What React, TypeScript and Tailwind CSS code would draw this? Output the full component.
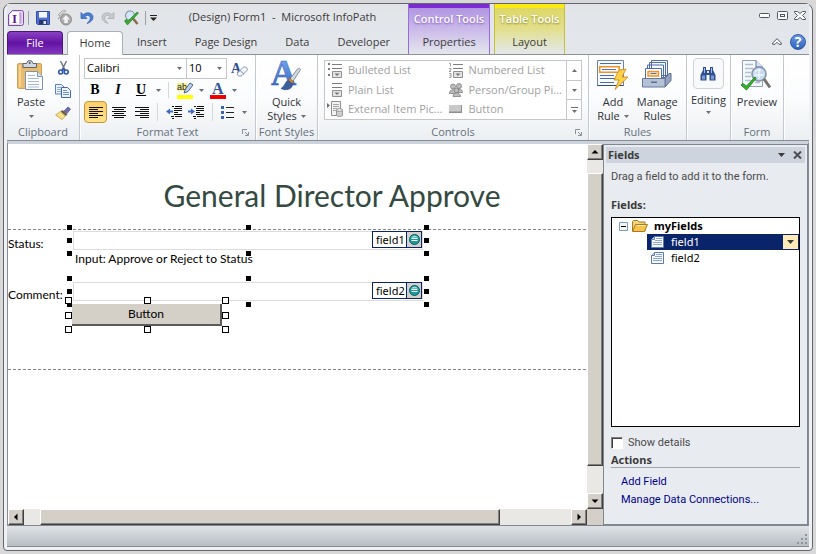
import type { ReactNode } from 'react';

interface ChildrenProps {
  children: ReactNode;
}

const TABS = ['Insert', 'Page Design', 'Data', 'Developer'];

/* ---------- small shared pieces ---------- */

function DownArrow({ className = 'text-[#6b6f75]' }: { className?: string }) {
  return (
    <svg width="5" height="3" viewBox="0 0 5 3" className={`shrink-0 ${className}`} aria-hidden="true">
      <path d="M0 0h5L2.5 3z" fill="currentColor" />
    </svg>
  );
}

function IconButton({ label, className = '', children }: ChildrenProps & { label: string; className?: string }) {
  return (
    <button type="button" aria-label={label} className={`flex shrink-0 items-center justify-center ${className}`}>
      {children}
    </button>
  );
}

function Divider({ className = 'h-4 bg-[#c9cdd2]' }: { className?: string }) {
  return <span className={`w-px shrink-0 ${className}`} />;
}

/* ---------- title bar icons ---------- */

function AppIcon() {
  return (
    <svg width="16" height="16" viewBox="0 0 16 16" aria-hidden="true">
      <path d="M4.5.5h9a2 2 0 0 1 2 2v11a2 2 0 0 1-2 2h-13v-11z" fill="#e9daf5" stroke="#7b4ba3" />
      <path d="M2 4.500 4.500 2H11v12H2z" fill="#fff" />
      <path d="M12.500 2.500v11" stroke="#c49ce4" strokeWidth="2" />
      <text x="4" y="13" fontSize="13" fontWeight="bold" fontFamily="Liberation Serif, serif" fill="#5b1f86">
        I
      </text>
    </svg>
  );
}

function SaveIcon() {
  return (
    <svg width="14" height="14" viewBox="0 0 14 14" aria-hidden="true">
      <path d="M.5.5h13v13h-12l-1-1z" fill="#4f6fd0" stroke="#3350a8" />
      <path d="M3 1h8v6H3z" fill="#f4f7fd" />
      <path d="M3 6h8v1H3z" fill="#b9c6e8" />
      <path d="M3 9h8v4.500H3z" fill="#26376f" />
      <path d="M7.500 10h2.500v3H7.500z" fill="#dfe6f6" />
    </svg>
  );
}

function PublishIcon() {
  return (
    <svg width="16" height="16" viewBox="0 0 16 16" aria-hidden="true">
      <path d="M6 0 1 5l2.500.5L1 9l6-4-2.500-.5L9 1z" fill="#d4d4d4" stroke="#9a9a9a" strokeWidth=".7" />
      <circle cx="9" cy="9.500" r="5.500" fill="#aaa" stroke="#8c8c8c" />
      <path d="m9 5 4 4.500h-2.300V13H7.300V9.500H5z" fill="#f2f2f2" />
    </svg>
  );
}

function UndoIcon({ redo = false }: { redo?: boolean }) {
  return (
    <svg width="14" height="14" viewBox="0 0 14 14" className={redo ? '-scale-x-100' : ''} aria-hidden="true">
      <path
        d="M1 1.500v6h6L5 5.500c2-1.800 5-1.300 5.300 1.200.2 2-1.500 4-3.300 5.800 3.500-1 6-3.500 6-6.300C13 1.800 7 .3 3.200 3.700z"
        fill={redo ? '#c8cbcf' : '#4b7fd4'}
        stroke={redo ? '#a3a7ac' : '#2c5cae'}
        strokeWidth=".7"
      />
    </svg>
  );
}

function PreviewSmallIcon() {
  return (
    <svg width="17" height="16" viewBox="0 0 17 16" aria-hidden="true">
      <circle cx="7" cy="5.500" r="4.500" fill="#d5e6f4" stroke="#8296ab" strokeWidth="1.200" />
      <path d="m10.500 9 4 5" stroke="#8c6a4f" strokeWidth="2.600" />
      <path d="m1.500 11 3 4L15.500 3 14 2 5 11l-1.500-2z" fill="#3aa935" stroke="#22761f" strokeWidth=".6" />
    </svg>
  );
}

/* ---------- ribbon icons ---------- */

function PasteIcon() {
  return (
    <svg width="28" height="31" viewBox="0 0 28 31" aria-hidden="true">
      <rect x=".5" y="3.500" width="24" height="25" rx="1.500" fill="#e9bb6b" stroke="#d0a155" />
      <path d="M2 5h2v22H2z" fill="#f5d395" />
      <path d="M6 3.500h3.500L11 .8h3.500l1.500 2.700h3.500v4H6z" fill="#d3d8df" stroke="#5b6470" />
      <circle cx="12.700" cy="3" r="1" fill="#4e5763" />
      <path d="M8.500 11.500h12l5 5v13h-17z" fill="#fbfdff" stroke="#7b93b8" />
      <path d="M20.500 11.500v5h5" fill="#d8e3f3" stroke="#7b93b8" />
      <path d="M11 15.500h7M11 18.500h11M11 21.500h11M11 24.500h11M11 27h11" stroke="#a9bad5" />
    </svg>
  );
}

function CutIcon() {
  return (
    <svg width="11" height="15" viewBox="0 0 11 15" aria-hidden="true">
      <path d="m2.500 0 4.500 9M8.500 0 4 9" stroke="#6d7786" strokeWidth="1.500" />
      <circle cx="2.700" cy="11" r="2" fill="none" stroke="#2d55b2" strokeWidth="1.600" />
      <circle cx="8.200" cy="11" r="2" fill="none" stroke="#2d55b2" strokeWidth="1.600" />
      <path d="M3.500 9.500 5.500 6.500 7.500 9.500z" fill="#2d55b2" />
    </svg>
  );
}

function CopyIcon() {
  return (
    <svg width="16" height="14" viewBox="0 0 16 14" aria-hidden="true">
      <path d="M.5.5h6l2.500 2.500v7H.5z" fill="#eef4fd" stroke="#5a80c4" />
      <path d="M2 3.500h4M2 5.500h4M2 7.500h4" stroke="#8fabde" />
      <path d="M6.500 3.500h6L15.500 6.500v7h-9z" fill="#eef4fd" stroke="#3f69b5" />
      <path d="M8 6.500h4M8 8.500h6M8 10.500h6" stroke="#6f93d3" />
    </svg>
  );
}

function BrushIcon() {
  return (
    <svg width="16" height="14" viewBox="0 0 16 14" aria-hidden="true">
      <path d="m9 5 4-4 2.500 2-3.500 4.500z" fill="#6e72a8" stroke="#474b80" strokeWidth=".7" />
      <path d="m7.500 4 5 4.500-2 1.500-5-4.500z" fill="#6b5b48" />
      <path d="M5.500 5.500 .5 9l6.500 4.500 3.500-3.500z" fill="#f3d977" stroke="#b8963f" strokeWidth=".7" />
      <path d="m3 8 5 4M4.500 7l4.500 4" stroke="#fff4bd" strokeWidth=".8" />
    </svg>
  );
}

function ClearFormatIcon() {
  return (
    <svg width="17" height="16" viewBox="0 0 17 16" aria-hidden="true">
      <text x="0" y="12" fontSize="14" fontWeight="bold" fontFamily="Liberation Serif, serif" fill="#2c4d91">
        A
      </text>
      <path d="m6.500 12 5.500-5.500c2-1.500 5.500.5 4 3L11 14.500c-2.500 1.500-5.500 0-4.500-2.500z" fill="#f5f8fd" stroke="#8090b5" />
      <path d="m9 9.500 4 3.500" stroke="#8090b5" />
    </svg>
  );
}

function HighlightIcon() {
  return (
    <svg width="16" height="17" viewBox="0 0 16 17" aria-hidden="true">
      <path d="M0 1h10v8H0z" fill="#f7ee8c" />
      <text x="0" y="8" fontSize="9" fontFamily="Liberation Sans, sans-serif" fill="#222">ab</text>
      <path d="m7 11 1.500-4L13 1l3 2-5 6.500z" fill="#c3d1e8" stroke="#44608f" />
      <path d="M0 13h16v4H0z" fill="#ffff00" />
    </svg>
  );
}

function FontColorIcon() {
  return (
    <svg width="16" height="17" viewBox="0 0 16 17" className="overflow-visible" aria-hidden="true">
      <text x="2" y="12" fontSize="16" fontWeight="bold" fontFamily="Liberation Serif, serif" fill="#2f539b">
        A
      </text>
      <path d="M0 13h16v4H0z" fill="#f00000" />
    </svg>
  );
}

function AlignIcon({ align }: { align: 'left' | 'center' | 'right' }) {
  const paths = {
    left: 'M0 .5h14M0 2.500h9M0 4.500h14M0 6.500h9M0 8.500h14M0 10.500h9',
    center: 'M0 .5h14M2 2.500h10M0 4.500h14M2 6.500h10M0 8.500h14M2 10.500h10',
    right: 'M0 .5h14M5 2.500h9M0 4.500h14M5 6.500h9M0 8.500h14M5 10.500h9',
  };
  return (
    <svg width="14" height="11" viewBox="0 0 14 11" aria-hidden="true">
      <path d={paths[align]} stroke="#111" />
    </svg>
  );
}

function IndentIcon({ outdent = false }: { outdent?: boolean }) {
  return (
    <svg width="16" height="13" viewBox="0 0 16 13" aria-hidden="true">
      <path d="M6 .5h2M9 .5h7M8 2.500h8M8 4.500h8M8 6.500h4M8 8.500h8M5 10.500h3M9 10.500h7M6 12.500h2" stroke="#111" />
      {outdent ? (
        <path d="M0 5.500 4 2.500v2h3v2H4v2z" fill="#3a6cc8" />
      ) : (
        <path d="M7 5.500 3 2.500v2H0v2h3v2z" fill="#3a6cc8" />
      )}
    </svg>
  );
}

function BulletsIcon() {
  return (
    <svg width="13" height="13" viewBox="0 0 13 13" aria-hidden="true">
      <path d="M0 0h3v3H0zM0 5h3v3H0zM0 10h3v3H0z" fill="#3c62b0" />
      <path d="M5 1.500h8M5 6.500h8M5 11.500h8" stroke="#222" />
    </svg>
  );
}

function QuickStylesIcon() {
  return (
    <svg width="30" height="31" viewBox="0 0 30 31" className="overflow-visible" aria-hidden="true">
      <defs>
        <linearGradient id="qs" x1="0" y1="0" x2="0" y2="1">
          <stop offset="0" stopColor="#7fb0f2" />
          <stop offset="1" stopColor="#2c5bb8" />
        </linearGradient>
      </defs>
      <text
        x="0"
        y="25"
        fontSize="35"
        fontWeight="bold"
        fontFamily="Liberation Serif, serif"
        fill="url(#qs)"
        stroke="#2f62b8"
        strokeWidth=".5"
      >
        A
      </text>
      <path d="m18.500 19.500 8-10.500c1.500-1.500 3.500-.5 2.500 1.500L21.500 22z" fill="#d4d9e0" stroke="#6c7684" strokeWidth=".8" />
      <path d="m17 20 2-1.500 3.500 3-1 2.500z" fill="#c98c3f" stroke="#835419" strokeWidth=".6" />
      <path d="M17 20.500c-3 1-2.500 5-7 8 5 2.500 11.500 1 11.500-4.500z" fill="#3c5f9e" stroke="#2a4577" strokeWidth=".6" />
    </svg>
  );
}

function ListIcon({ kind }: { kind: 'bullet' | 'number' | 'plain' }) {
  return (
    <svg width="16" height="16" viewBox="0 0 16 16" aria-hidden="true">
      <path d="M5 1.500h10M5 5.500h10" stroke="#7d7d7d" />
      {kind === 'bullet' && <path d="M1 0h2v2H1zM1 5h2v2H1zM1 11h2v2H1z" fill="#7d7d7d" />}
      {kind === 'number' && (
        <path d="M1 .5h1.500v3M1 5.500h2v1.500l-2 1.500h2M1 10.500h2v4H1M1.500 12.500H3" fill="none" stroke="#8a8a8a" strokeWidth=".8" />
      )}
      <path d="M5.500 8.500h9v6h-9z" fill="#e4e4e4" stroke="#8f8f8f" />
      <path d="M7.500 10.500h5L10 13z" fill="#777" />
    </svg>
  );
}

function ExternalItemIcon() {
  return (
    <svg width="16" height="16" viewBox="0 0 16 16" aria-hidden="true">
      <path d="M0 2v5l3-2.500z" fill="#6f6f6f" />
      <path d="M4.500.5h9v14h-9z" fill="#f3f3f3" stroke="#8f8f8f" />
      <path d="M6 3.500h6M6 5.500h6M6 7.500h4M6 9.500h3" stroke="#a5a5a5" />
      <path d="M9.500 9v5.500c1.500 1.300 4.500 1.300 6 0V9z" fill="#cfcfcf" stroke="#989898" />
      <ellipse cx="12.500" cy="9" rx="3" ry="1.500" fill="#e9e9e9" stroke="#989898" />
    </svg>
  );
}

function PeopleIcon() {
  return (
    <svg width="14" height="14" viewBox="0 0 14 14" aria-hidden="true">
      <g fill="#bdbdbd" stroke="#808080" strokeWidth=".8">
        <circle cx="4" cy="3.500" r="2.500" />
        <circle cx="10" cy="3" r="2.500" />
        <path d="M.5 10.500c0-5 6-5 6.500 0zM7 9.500c0-5 6-5 6.500 0z" />
        <circle cx="7.500" cy="7.500" r="2.300" />
        <path d="M4 13.500c0-5 7-5 7.500 0z" />
      </g>
    </svg>
  );
}

function ButtonControlIcon() {
  return (
    <svg width="13" height="8" viewBox="0 0 13 8" aria-hidden="true">
      <path d="M0 0h13v8H0z" fill="#8d8d8d" />
      <path d="M0 0h12v6.500H0z" fill="#c9c9c9" />
    </svg>
  );
}

function AddRuleIcon() {
  return (
    <svg width="31" height="31" viewBox="0 0 31 31" aria-hidden="true">
      <path d="M.5.5h26v25H.5z" fill="#f6f9fd" stroke="#6d83a8" />
      <path d="M.5 25.500h26" stroke="#334a73" />
      <path d="M3 3.500h21M3 15.500h14M3 18.500h19M3 22.500h14" stroke="#4d6ba2" />
      <path d="M2.700 6.700h19.500v5.500H2.700z" fill="#fff" stroke="#ee9224" strokeWidth="1.500" />
      <path d="M5 9.500h14" stroke="#5472a8" />
      <path d="m22 10 7-1-4 8h6L18 29.500l4-9.500h-5z" fill="#ffd24a" stroke="#c98410" strokeWidth=".8" />
    </svg>
  );
}

function ManageRulesIcon() {
  return (
    <svg width="30" height="28" viewBox="0 0 30 28" aria-hidden="true">
      <path d="M9.500.5h16v15h-16zM7.500 2.500h16v15h-16zM5.500 5h16v15h-16z" fill="#f5f8fd" stroke="#4f6ca3" />
      <path d="M3.500 8.500h16v12h-16z" fill="#fff" stroke="#4f6ca3" />
      <path d="M6 11.500h10.500v4.500H6z" fill="#f6e5cf" stroke="#ee9224" strokeWidth="1.400" />
      <path d="M8.500 13.500h6" stroke="#5472a8" />
      <path d="m23 18.500 4-5h2v7l-6 6.500z" fill="#93a3bd" stroke="#5c6e8d" />
      <path d="M.5 18.500H23v8.500H.5z" fill="#b5c1d4" stroke="#64789a" />
      <path d="M9 21.500h6v1.500H9z" fill="#5c6e8d" />
    </svg>
  );
}

function BinocularsIcon() {
  return (
    <svg width="16" height="14" viewBox="0 0 16 14" aria-hidden="true">
      <path d="M3 0h3v3h4V0h3v3l2.500 5v5.500h-6V8h-3v5.500h-6V8L3 3z" fill="#2e5091" />
      <path d="M2 8.500h3v4H2zM11 8.500h3v4h-3z" fill="#7d9bd0" />
      <path d="M4 1h1v5H4zM11 1h1v5h-1z" fill="#a6bce3" />
      <path d="M7 4h2v2H7z" fill="#dfe8f6" />
    </svg>
  );
}

function PreviewIcon() {
  return (
    <svg width="31" height="31" viewBox="0 0 31 31" aria-hidden="true">
      <path d="M1.500.5H15L21.500 7v19.500h-20z" fill="#f7fafd" stroke="#8ea0bd" />
      <path d="M15 .5V7h6.500" fill="#dae4f2" stroke="#5b78b0" />
      <path d="M4 4.500h8M4 8.500h8M4 12.500h6M4 16.500h6M4 20.500h6M14 22.500h5" stroke="#b1bfd5" strokeWidth="1.500" />
      <circle cx="18" cy="14" r="7" fill="#c6dcf3" stroke="#8794a6" strokeWidth="1.600" />
      <path d="M14 12.500c1-2.500 4-3.500 6-2M18 9v10M13.500 15h9" fill="none" stroke="#f3f9ff" strokeWidth="1.300" />
      <path d="m23 19 6 8.500" stroke="#77706f" strokeWidth="3" />
      <path d="m0 25 1.800-1.600L5.500 26 14 17l1 1.500L5.500 30z" fill="#31b52b" stroke="#17741a" strokeWidth=".8" />
    </svg>
  );
}

/* ---------- ribbon layout ---------- */

function RibbonGroup({
  title,
  launcher = false,
  className = '',
  children,
}: ChildrenProps & { title: string; launcher?: boolean; className?: string }) {
  return (
    <section
      className={`flex shrink-0 flex-col border-r border-[#c3c8ce] shadow-[1px_0_0_#fff] ${className}`}
      aria-label={title || 'Editing'}
    >
      <div className="flex flex-1 justify-center">{children}</div>
      <div className="relative h-4 text-center leading-4 whitespace-nowrap text-[#65707e]">
        {title}
        {launcher && (
          <button type="button" aria-label={`${title} options`} className="absolute right-1.5 bottom-1">
            <svg width="7" height="7" viewBox="0 0 7 7" aria-hidden="true">
              <path d="M.5 5V.5H5M3 3l3 3M6.500 3v3.500H3" fill="none" stroke="#8a9098" />
            </svg>
          </button>
        )}
      </div>
    </section>
  );
}

function BigButton({ icon, lines, arrow = false }: { icon: ReactNode; lines: string[]; arrow?: boolean }) {
  return (
    <button type="button" className="flex flex-col items-center pt-[5px] leading-[14px] whitespace-nowrap">
      <span className="flex h-[31px] items-start justify-center">{icon}</span>
      <span className="mt-1">{lines[0]}</span>
      <span className="flex h-[14px] items-center gap-1">
        {lines[1]}
        {arrow && <DownArrow />}
      </span>
    </button>
  );
}

function ComboBox({ label, value, className }: { label: string; value: string; className: string }) {
  return (
    <div className={`grid h-[21px] items-center border border-[#c3c7cc] bg-white ${className}`}>
      <select
        aria-label={label}
        className="col-start-1 row-start-1 h-full w-full appearance-none bg-transparent px-0.5 text-black"
      >
        <option>{value}</option>
      </select>
      <span className="pointer-events-none col-start-1 row-start-1 justify-self-end pr-1">
        <DownArrow />
      </span>
    </div>
  );
}

function ClipboardGroup() {
  return (
    <RibbonGroup title="Clipboard" className="w-[73px]">
      <div className="flex w-full gap-2.5 pl-2.5">
        <BigButton icon={<PasteIcon />} lines={['Paste', '']} arrow />
        <div className="flex flex-col gap-[7px] pt-1.5">
          <IconButton label="Cut" className="h-[15px] w-4">
            <CutIcon />
          </IconButton>
          <IconButton label="Copy" className="h-[15px] w-4">
            <CopyIcon />
          </IconButton>
          <IconButton label="Format Painter" className="h-[15px] w-4">
            <BrushIcon />
          </IconButton>
        </div>
      </div>
    </RibbonGroup>
  );
}

function FormatTextGroup() {
  return (
    <RibbonGroup title="Format Text" launcher className="w-44">
      <div className="flex w-full flex-col pt-[3px] pl-1">
        <div className="flex items-center">
          <ComboBox label="Font" value="Calibri" className="w-[103px]" />
          <ComboBox label="Font size" value="10" className="w-10 border-l-0" />
          <IconButton label="Clear formatting" className="ml-1 h-[21px] w-[17px]">
            <ClearFormatIcon />
          </IconButton>
        </div>
        <div className="flex h-[22px] items-center font-['Liberation_Serif',serif] text-sm text-black">
          <IconButton label="Bold" className="w-[22px] font-bold">
            B
          </IconButton>
          <IconButton label="Italic" className="w-6 font-bold italic">
            I
          </IconButton>
          <IconButton label="Underline" className="w-[22px] font-bold underline">
            U
          </IconButton>
          <IconButton label="Underline style" className="w-3">
            <DownArrow />
          </IconButton>
          <Divider className="mr-2 ml-1 h-4 bg-[#d4d7db]" />
          <IconButton label="Highlight">
            <HighlightIcon />
          </IconButton>
          <IconButton label="Highlight colour" className="w-[17px]">
            <DownArrow />
          </IconButton>
          <IconButton label="Font colour">
            <FontColorIcon />
          </IconButton>
          <IconButton label="Font colour list" className="w-[17px]">
            <DownArrow />
          </IconButton>
        </div>
        <div className="flex h-[22px] items-center">
          <IconButton
            label="Align left"
            className="h-[22px] w-[23px] rounded-sm border border-[#c2963c] bg-linear-to-b from-[#fbcf6c] to-[#ffe38a]"
          >
            <AlignIcon align="left" />
          </IconButton>
          <IconButton label="Align center" className="w-6">
            <AlignIcon align="center" />
          </IconButton>
          <IconButton label="Align right" className="w-[22px]">
            <AlignIcon align="right" />
          </IconButton>
          <Divider className="mx-1 h-[18px] bg-[#d4d7db]" />
          <IconButton label="Decrease indent" className="ml-1">
            <IndentIcon outdent />
          </IconButton>
          <IconButton label="Increase indent" className="ml-1.5">
            <IndentIcon />
          </IconButton>
          <Divider className="mx-2 h-[18px] bg-[#d4d7db]" />
          <IconButton label="Bullets">
            <BulletsIcon />
          </IconButton>
          <IconButton label="Bullet styles" className="w-[21px]">
            <DownArrow />
          </IconButton>
        </div>
      </div>
    </RibbonGroup>
  );
}

const GALLERY = [
  { name: 'Bulleted List', icon: <ListIcon kind="bullet" /> },
  { name: 'Numbered List', icon: <ListIcon kind="number" /> },
  { name: 'Plain List', icon: <ListIcon kind="plain" /> },
  { name: 'Person/Group Pi...', icon: <PeopleIcon /> },
  { name: 'External Item Pic...', icon: <ExternalItemIcon /> },
  { name: 'Button', icon: <ButtonControlIcon /> },
];

function ControlsGroup() {
  return (
    <RibbonGroup title="Controls" launcher className="w-[271px]">
      <div className="mt-[5px] flex h-[60px] w-[258px] border border-[#c3c7cc] bg-white">
        <div className="grid flex-1 grid-cols-2 grid-rows-3">
          {GALLERY.map((item) => (
            <button
              key={item.name}
              type="button"
              disabled
              className="flex items-center gap-1 pl-px whitespace-nowrap text-[#a0a0a0]"
            >
              <span className="flex w-[18px] justify-center">{item.icon}</span>
              {item.name}
            </button>
          ))}
        </div>
        <div className="flex w-[15px] flex-col divide-y divide-[#c3c7cc] border-l border-[#c3c7cc]">
          <IconButton label="Scroll up" className="flex-1">
            <svg width="5" height="3" viewBox="0 0 5 3" aria-hidden="true">
              <path d="M0 3h5L2.500 0z" fill="#6b6f75" />
            </svg>
          </IconButton>
          <IconButton label="Scroll down" className="flex-1">
            <DownArrow />
          </IconButton>
          <IconButton label="More controls" className="flex-1">
            <svg width="7" height="6" viewBox="0 0 7 6" aria-hidden="true">
              <path d="M0 .5h7" stroke="#6b6f75" />
              <path d="M1 3h5L3.500 6z" fill="#6b6f75" />
            </svg>
          </IconButton>
        </div>
      </div>
    </RibbonGroup>
  );
}

function Ribbon() {
  return (
    <div className="flex h-[86px] shrink-0 overflow-hidden border-b border-[#868d96] bg-linear-to-b from-white via-[#fbfcfd] to-[#eceff2] text-[#2f3338]">
      <ClipboardGroup />
      <FormatTextGroup />
      <RibbonGroup title="Font Styles" className="w-[62px]">
        <BigButton icon={<QuickStylesIcon />} lines={['Quick', 'Styles']} arrow />
      </RibbonGroup>
      <ControlsGroup />
      <RibbonGroup title="Rules" className="w-[98px]">
        <div className="flex gap-2">
          <BigButton icon={<AddRuleIcon />} lines={['Add', 'Rule']} arrow />
          <BigButton icon={<ManageRulesIcon />} lines={['Manage', 'Rules']} />
        </div>
      </RibbonGroup>
      <RibbonGroup title="" className="w-11">
        <button type="button" className="flex flex-col items-center pt-[3px]">
          <span className="flex size-[31px] items-center justify-center rounded-sm border border-[#cfd3d8] bg-[#f8f9fb]">
            <BinocularsIcon />
          </span>
          <span className="mt-1 leading-[14px]">Editing</span>
          <span className="mt-1">
            <DownArrow />
          </span>
        </button>
      </RibbonGroup>
      <RibbonGroup title="Form" className="w-[53px]">
        <BigButton icon={<PreviewIcon />} lines={['Preview', '']} />
      </RibbonGroup>
    </div>
  );
}

/* ---------- title bar and tabs ---------- */

function Header() {
  return (
    <header className="flex h-[51px] shrink-0 border-b border-[#8b929b] bg-linear-to-b from-[#e2e4e8] to-[#e3e7eb] text-[#3b3b3b]">
      <div className="flex w-[401px] shrink-0 flex-col">
        <div className="flex h-[27px] items-center pl-px">
          <AppIcon />
          <Divider className="ml-1 h-3.5 bg-[#9aa0a8]" />
          <IconButton label="Save" className="ml-[7px]">
            <SaveIcon />
          </IconButton>
          <IconButton label="Quick Publish" className="ml-[7px]">
            <PublishIcon />
          </IconButton>
          <IconButton label="Undo" className="ml-[7px]">
            <UndoIcon />
          </IconButton>
          <IconButton label="Redo" className="ml-[7px]">
            <UndoIcon redo />
          </IconButton>
          <IconButton label="Preview" className="ml-2">
            <PreviewSmallIcon />
          </IconButton>
          <Divider className="ml-[5px] h-3.5 bg-[#9aa0a8]" />
          <IconButton label="Customize Quick Access Toolbar" className="ml-1">
            <svg width="7" height="6" viewBox="0 0 7 6" aria-hidden="true">
              <path d="M0 .5h7" stroke="#222" />
              <path d="M0 2.500h7L3.500 6z" fill="#222" />
            </svg>
          </IconButton>
          <h1 className="flex-1 text-center whitespace-pre">(Design) Form1  -  Microsoft InfoPath</h1>
        </div>
        <nav className="flex flex-1 items-stretch" aria-label="Ribbon tabs">
          <button
            type="button"
            className="w-14 rounded-t-sm border border-b-0 border-[#4a1580] bg-linear-to-b from-[#8a3fc4] via-[#6310a3] to-[#8438c0] text-white"
          >
            File
          </button>
          <button
            type="button"
            className="-mb-px ml-1 w-[56px] rounded-t-sm border border-b-0 border-[#a9afb7] bg-white"
          >
            Home
          </button>
          {TABS.map((tab) => (
            <button key={tab} type="button" className="px-3.5 whitespace-nowrap">
              {tab}
            </button>
          ))}
        </nav>
      </div>
      <div className="flex w-[82px] shrink-0 flex-col border-x border-[#9a6ad6] bg-linear-to-b from-[#ab8fe0] via-[#cbb9ea] to-[#e3e7eb] text-center">
        <div className="h-1 bg-[#7a2bd2]" />
        <div className="flex h-[23px] items-center justify-center font-semibold whitespace-nowrap text-white [text-shadow:0_1px_2px_#7d4fc4]">
          Control Tools
        </div>
        <button type="button" className="flex-1">
          Properties
        </button>
      </div>
      <div className="ml-1 flex w-[71px] shrink-0 flex-col border-x border-[#c9bd3c] bg-linear-to-b from-[#dcd65c] via-[#e2df8c] to-[#e3e7eb] text-center">
        <div className="h-1 bg-[#fbe90f]" />
        <div className="flex h-[23px] items-center justify-center font-semibold whitespace-nowrap text-white [text-shadow:0_1px_2px_#8b8424]">
          Table Tools
        </div>
        <button type="button" className="flex-1">
          Layout
        </button>
      </div>
      <div className="flex flex-1 flex-col items-end pr-[3px]">
        <div className="flex h-[23px] items-center gap-1.5">
          <IconButton label="Minimize" className="size-3">
            <svg width="11" height="5" viewBox="0 0 11 5" aria-hidden="true">
              <rect x=".5" y=".5" width="10" height="4" rx="1" fill="#fff" stroke="#4f5560" />
            </svg>
          </IconButton>
          <IconButton label="Restore" className="size-3">
            <svg width="11" height="9" viewBox="0 0 11 9" aria-hidden="true">
              <rect x=".5" y=".5" width="10" height="8" rx="1" fill="#fff" stroke="#4f5560" />
              <rect x="3.500" y="3.500" width="4" height="2" fill="#fff" stroke="#4f5560" />
            </svg>
          </IconButton>
          <IconButton label="Close" className="size-3">
            <svg width="12" height="9" viewBox="0 0 12 9" aria-hidden="true">
              <path
                d="M.5.5h3L6 2.500 8.500.5h3v1L8.500 4.500l3 3v1h-3L6 6.500 3.500 8.500h-3v-1l3-3-3-3z"
                fill="#fff"
                stroke="#4f5560"
              />
            </svg>
          </IconButton>
        </div>
        <div className="flex flex-1 items-center gap-2 pt-0.5">
          <IconButton label="Collapse ribbon">
            <svg width="10" height="7" viewBox="0 0 10 7" aria-hidden="true">
              <path d="M5 .7 9.300 5v1.300H7L5 4.300l-2 2H.7V5z" fill="#fff" stroke="#4f5560" />
            </svg>
          </IconButton>
          <IconButton
            label="Help"
            className="size-4 rounded-full border border-[#2b58a6] bg-linear-to-b from-[#6b98e0] to-[#2d62bd] text-sm leading-none font-bold text-white"
          >
            ?
          </IconButton>
        </div>
      </div>
    </header>
  );
}

/* ---------- design surface ---------- */

// 3x3 ring of grab handles around a selected control
function Handles({ hollow = false }: { hollow?: boolean }) {
  const box = hollow ? 'size-[7px] border border-black bg-white' : 'size-[5px] bg-black';
  return (
    <span
      className={`pointer-events-none absolute flex flex-col justify-between ${hollow ? '-inset-[7px]' : '-inset-1.5'}`}
      aria-hidden="true"
    >
      {[3, 2, 3].map((count, row) => (
        <span key={row} className="flex justify-between">
          {Array.from({ length: count }, (_, i) => (
            <span key={i} className={box} />
          ))}
        </span>
      ))}
    </span>
  );
}

function BoundField({ id, label, binding }: { id: string; label: string; binding: string }) {
  return (
    <div className="flex items-start">
      <label htmlFor={id} className="w-[65px] shrink-0 pt-[7px] leading-3 whitespace-nowrap">
        {label}
      </label>
      <div className="relative h-[19px] w-[350px]">
        <input id={id} type="text" className="block h-full w-full border border-[#dcdcdc] bg-white px-1" />
        <span className="absolute top-0 right-px flex h-[17px] w-[50px] border border-[#0a246a] bg-white font-['Noto_Sans',sans-serif] text-[11px] leading-[15px]">
          <span className="flex-1 pl-[3px]">{binding}</span>
          <span className="flex w-[15px] items-center justify-center border-l border-[#0a246a] bg-[#d4d0c8]">
            <svg width="11" height="11" viewBox="0 0 11 11" aria-hidden="true">
              <circle cx="5.500" cy="5.500" r="5" fill="#1a9a9a" stroke="#0b5a66" />
              <path d="M2 3.500c1.500-2.500 5.500-2.500 7 0z" fill="#9fe3e0" />
              <path d="M2.500 4.500h6M2.500 6.500h6" stroke="#fff" />
            </svg>
          </span>
        </span>
        <Handles />
      </div>
    </div>
  );
}

function DesignSurface() {
  return (
    <main className="min-w-0 flex-1 overflow-hidden bg-white font-['Lato',sans-serif] text-xs text-black">
      <div className="w-[648px]">
        <h2 className="flex h-[85px] items-center justify-center pt-4 text-3xl text-[#34493f]">
          General Director Approve
        </h2>
        <div className="h-[141px] border-y border-dashed border-[#858585] pt-px">
          <BoundField id="status" label="Status:" binding="field1" />
          <p className="pl-[67px] leading-[18px]">Input: Approve or Reject to Status</p>
          <div className="mt-[14px]">
            <BoundField id="comment" label="Comment:" binding="field2" />
          </div>
          <div className="relative mt-[3px] ml-[64px] h-[22px] w-[150px]">
            <button
              type="button"
              className="h-full w-full border-r-2 border-b-2 border-[#5b5b5b] bg-[#d4d0c8] text-center"
            >
              Button
            </button>
            <Handles hollow />
          </div>
        </div>
      </div>
    </main>
  );
}

const ARROW_PATHS = {
  up: 'M4 2 7.500 5.500h-7z',
  down: 'M4 6 .5 2.500h7z',
  left: 'M2 4 5.500.5v7z',
  right: 'M6 4 2.500.5v7z',
};

function ScrollArrow({ dir }: { dir: 'up' | 'down' | 'left' | 'right' }) {
  return (
    <IconButton
      label={`Scroll ${dir}`}
      className="size-4 border border-t-white border-r-[#404040] border-b-[#404040] border-l-white bg-[#d4d0c8] shadow-[inset_-1px_-1px_0_#808080]"
    >
      <svg width="8" height="8" viewBox="0 0 8 8" aria-hidden="true">
        <path d={ARROW_PATHS[dir]} fill="#000" />
      </svg>
    </IconButton>
  );
}

const TRACK = 'bg-[#eae8e4]';
const THUMB =
  'border border-t-white border-r-[#404040] border-b-[#404040] border-l-white bg-[#d4d0c8] shadow-[inset_-1px_-1px_0_#808080]';

function VerticalScrollbar() {
  return (
    <div className={`flex w-4 shrink-0 flex-col ${TRACK}`}>
      <ScrollArrow dir="up" />
      <div className="flex flex-1 flex-col">
        <div className="h-[4%]" />
        <div className={`h-[88%] ${THUMB}`} />
      </div>
      <ScrollArrow dir="down" />
    </div>
  );
}

function HorizontalScrollbar() {
  return (
    <div className="flex h-4 shrink-0 bg-[#d4d0c8]">
      <div className={`flex min-w-0 flex-1 ${TRACK}`}>
        <ScrollArrow dir="left" />
        <div className="flex flex-1">
          <div className="w-[3%]" />
          <div className={`w-[84%] ${THUMB}`} />
        </div>
        <ScrollArrow dir="right" />
      </div>
      <div className="w-4 shrink-0" />
    </div>
  );
}

/* ---------- fields pane ---------- */

function FieldIcon() {
  return (
    <svg width="13" height="12" viewBox="0 0 13 12" aria-hidden="true">
      <path d="M3.500.5h9v11H.5v-8z" fill="#f5f8fd" stroke="#5d7bb0" />
      <path d="M.5 3.500h3v-3" fill="#cfdcf0" stroke="#5d7bb0" />
      <path d="M5 2.500h6M4 4.500h7M2 6.500h9M2 8.500h9" stroke="#8ea6d0" />
    </svg>
  );
}

function FolderIcon() {
  return (
    <svg width="16" height="12" viewBox="0 0 16 12" aria-hidden="true">
      <path d="M.5 11V1.500l1-1h4l1.500 1.500h6v9z" fill="#f2d27a" stroke="#a67c20" />
      <path d="M3.500 4.500h12l-3 7H.5z" fill="#f8c24d" stroke="#a67c20" />
      <path d="M4.500 5.500h9" stroke="#ffeab0" />
    </svg>
  );
}

function FieldsPane() {
  return (
    <aside className="flex w-[205px] shrink-0 flex-col border border-[#7f8790] bg-[#e8ecf1] px-0.5 pt-0.5 font-['Noto_Sans',sans-serif]">
      <div className="flex h-4 items-center bg-[#cdd4dd] pl-0.5 font-bold text-[#3b3b3b]">
        <h2 className="flex-1">Fields</h2>
        <IconButton label="Pane options" className="mr-2">
          <svg width="7" height="4" viewBox="0 0 7 4" aria-hidden="true">
            <path d="M0 0h7L3.500 4z" fill="#3b3b3b" />
          </svg>
        </IconButton>
        <IconButton label="Close pane" className="mr-[3px]">
          <svg width="9" height="8" viewBox="0 0 9 8" aria-hidden="true">
            <path d="m1 .5 7 7M8 .5l-7 7" stroke="#4c4f54" strokeWidth="2" />
          </svg>
        </IconButton>
      </div>
      <div className="flex flex-1 flex-col px-[5px] text-[#4a4a4a]">
        <p className="mt-1.5 font-['Roboto',sans-serif] leading-4 whitespace-nowrap">
          Drag a field to add it to the form.
        </p>
        <h3 className="mt-3 leading-4 font-bold text-[#3b3b3b]">Fields:</h3>
        <ul className="mt-1 flex-1 border border-black bg-white leading-4 text-black">
          <li className="flex h-4 items-center pl-[7px] font-bold">
            <svg width="9" height="9" viewBox="0 0 9 9" aria-hidden="true">
              <path d="M.5.5h8v8h-8z" fill="#f4f4f0" stroke="#7b9ebd" />
              <path d="M2 4.500h5" stroke="#000" />
            </svg>
            <span className="mr-1.5 ml-1">
              <FolderIcon />
            </span>
            myFields
          </li>
          <li className="ml-[35px] flex h-4 items-center bg-[#0a246a] pl-1 text-white">
            <FieldIcon />
            <span className="ml-[7px] flex-1">field1</span>
            <IconButton label="field1 menu" className="mr-px h-3.5 w-[15px] bg-[#ffeab8]">
              <svg width="7" height="4" viewBox="0 0 7 4" aria-hidden="true">
                <path d="M0 0h7L3.500 4z" fill="#3b3b3b" />
              </svg>
            </IconButton>
          </li>
          <li className="ml-[35px] flex h-4 items-center pl-1">
            <FieldIcon />
            <span className="ml-[7px]">field2</span>
          </li>
        </ul>
        <div className="mt-2 flex h-4 items-center gap-[5px] font-['Roboto',sans-serif]">
          <input
            id="show-details"
            type="checkbox"
            className="size-3 appearance-none border border-t-[#808080] border-r-white border-b-white border-l-[#808080] bg-white shadow-[inset_1px_1px_0_#404040]"
          />
          <label htmlFor="show-details">Show details</label>
        </div>
        <h3 className="mt-0.5 border-b border-[#a0a5ab] leading-[14px] font-bold text-[#3b3b3b]">Actions</h3>
        <div className="flex flex-col gap-0.5 pt-1.5 pb-4 pl-2.5 font-['Roboto',sans-serif] leading-4 text-[#00008b]">
          <a href="#add-field">Add Field</a>
          <a href="#data-connections">Manage Data Connections...</a>
        </div>
      </div>
    </aside>
  );
}

function StatusBar() {
  return (
    <footer className="flex h-[22px] shrink-0 items-end justify-end border-y border-t-[#7f8790] border-b-[#868d96] bg-linear-to-b from-[#dfe3e8] to-[#b9bec4]">
      <svg width="12" height="12" viewBox="0 0 12 12" aria-hidden="true">
        <path
          d="M8 0h2v2H8zM4 4h2v2H4zM8 4h2v2H8zM0 8h2v2H0zM4 8h2v2H4zM8 8h2v2H8z"
          fill="#8e949c"
        />
      </svg>
    </footer>
  );
}

export default function App() {
  return (
    <div className="flex h-screen min-h-[400px] bg-[#d9d7d7] p-[3px] font-['Open_Sans',sans-serif] text-[11px]">
      <div className="flex min-w-0 flex-1 flex-col rounded-t-lg rounded-b-sm border border-[#5f6770] bg-[#eef0f3] px-[3px] pb-[3px]">
        <Header />
        <Ribbon />
        <div className="flex min-h-0 flex-1 border-x border-t-[3px] border-x-[#868d96] border-t-[#cdd3da]">
          <div className="flex min-w-0 flex-1 flex-col">
            <div className="flex min-h-0 flex-1">
              <DesignSurface />
              <VerticalScrollbar />
            </div>
            <HorizontalScrollbar />
          </div>
          <FieldsPane />
        </div>
        <StatusBar />
      </div>
    </div>
  );
}
